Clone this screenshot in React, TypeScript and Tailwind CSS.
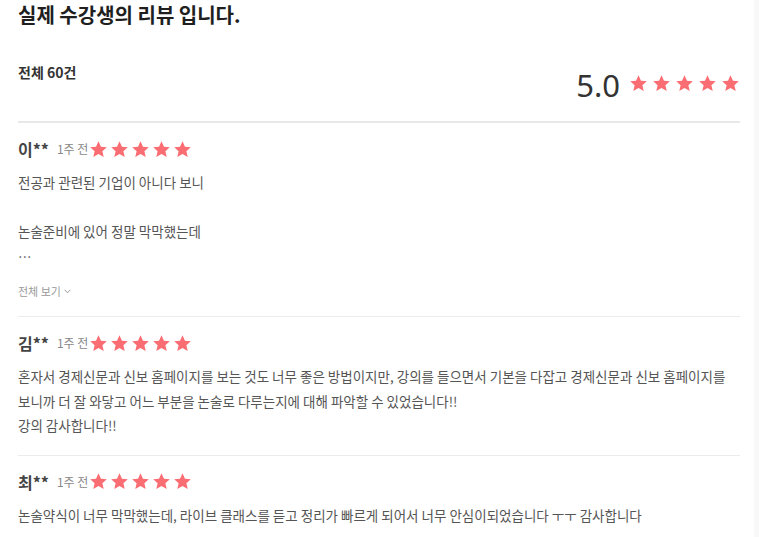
const Star = ({ size }: { size: number }) => (
  <svg width={size} height={size} viewBox="0 0 24 24" className="shrink-0">
    <path
      d="M12 1.5l3.1 6.9 7.4.7-5.6 5 1.7 7.4L12 17.6l-6.6 3.9 1.7-7.4-5.6-5 7.4-.7z"
      fill="#fa6d72"
    />
  </svg>
);

const Stars = ({ size, gap }: { size: number; gap: string }) => (
  <div className={`flex items-center ${gap}`}>
    {[0, 1, 2, 3, 4].map((i) => (
      <Star key={i} size={size} />
    ))}
  </div>
);

type Review = {
  name: string;
  when: string;
  lines: string[];
  more?: boolean;
};

const reviews: Review[] = [
  {
    name: "이**",
    when: "1주 전",
    lines: ["전공과 관련된 기업이 아니다 보니", "", "논술준비에 있어 정말 막막했는데", "…"],
    more: true,
  },
  {
    name: "김**",
    when: "1주 전",
    lines: [
      "혼자서 경제신문과 신보 홈페이지를 보는 것도 너무 좋은 방법이지만, 강의를 들으면서 기본을 다잡고 경제신문과 신보 홈페이지를 보니까 더 잘 와닿고 어느 부분을 논술로 다루는지에 대해 파악할 수 있었습니다!!",
      "강의 감사합니다!!",
    ],
  },
  {
    name: "최**",
    when: "1주 전",
    lines: ["논술약식이 너무 막막했는데, 라이브 클래스를 듣고 정리가 빠르게 되어서 너무 안심이되었습니다 ㅜㅜ 감사합니다"],
  },
];

const ReviewItem = ({ r, last }: { r: Review; last: boolean }) => (
  <div className={`pt-[14px] ${last ? "" : "pb-[17px] border-b border-[#ececec]"}`}>
    <div className="flex items-center h-6">
      <span className="text-[16px] font-bold text-[#444] leading-6">{r.name}</span>
      <span className="ml-[8px] mr-[1px] text-[12px] text-[#888] leading-6">{r.when}</span>
      <Stars size={19} gap="gap-[2px]" />
    </div>
    <div className="mt-[9px] text-[13.5px] leading-[24.5px] text-[#555]">
      {r.lines.map((l, i) => (
        <p key={i} className="min-h-[24.5px]">
          {l}
        </p>
      ))}
    </div>
    {r.more && (
      <div className="mt-[15px] flex items-center gap-[3px] text-[11px] leading-4 text-[#999]">
        전체 보기
        <svg width="7" height="5" viewBox="0 0 7 5">
          <path d="M0.7 0.8L3.5 3.8L6.3 0.8" stroke="#999" strokeWidth="1" fill="none" />
        </svg>
      </div>
    )}
  </div>
);

export default function App() {
  return (
    <div
      className="flex h-[537px] w-[759px] overflow-hidden bg-white"
      style={{ fontFamily: '"Noto Sans CJK KR", "Noto Sans", sans-serif' }}
    >
      <div className="w-[754px] pl-[18px] pr-[14px]">
        <h1 className="text-[20px] font-bold leading-[30px] text-[#1f1f1f]">
          실제 수강생의 리뷰 입니다.
        </h1>
        <div className="mt-[32px] flex justify-between">
          <div className="text-[14px] font-bold leading-5 text-[#333]">전체 60건</div>
          <div className="mt-[3px] flex items-center h-10">
            <span
              className="text-[31px] leading-10 text-[#333] mr-[9px]"
              style={{ fontFamily: '"Noto Sans", sans-serif' }}
            >
              5.0
            </span>
            <div className="mb-1">
              <Stars size={19} gap="gap-[4px]" />
            </div>
          </div>
        </div>
        <div className="mt-[16px] border-t-2 border-[#e8e8e8]" />
        {reviews.map((r, i) => (
          <ReviewItem key={i} r={r} last={i === reviews.length - 1} />
        ))}
      </div>
      <div className="flex-1 bg-[#f8f8f8]" />
    </div>
  );
}
